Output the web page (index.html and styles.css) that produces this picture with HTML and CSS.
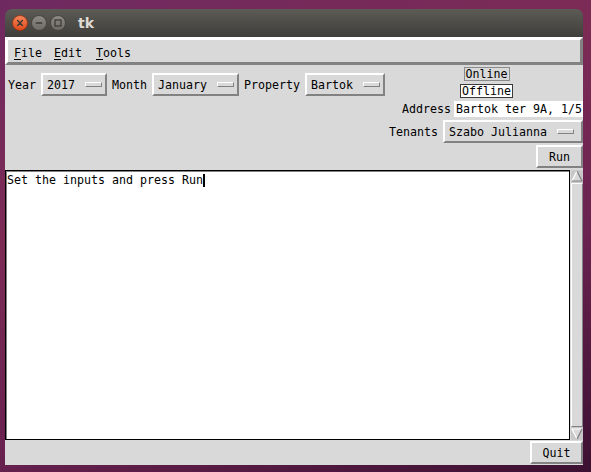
FILE: index.html
```html
<!DOCTYPE html>
<html>
<head>
<meta charset="utf-8">
<title>tk</title>
<link rel="stylesheet" href="styles.css">
</head>
<body>
<div class="window">
  <div class="titlebar">
    <div class="wbtns">
      <span class="wb">
        <svg width="16" height="16" viewBox="0 0 16 16"><defs><linearGradient id="cg" x1="0" y1="0" x2="0" y2="1"><stop offset="0" stop-color="#f6855c"/><stop offset="1" stop-color="#df4a1a"/></linearGradient></defs><circle cx="8" cy="8" r="7.5" fill="url(#cg)" stroke="#9a3210" stroke-width="0.8"/><path d="M5.6 5.6 L10.4 10.4 M10.4 5.6 L5.6 10.4" stroke="#3c3b37" stroke-width="1.4" stroke-linecap="round"/></svg>
      </span>
      <span class="wb">
        <svg width="16" height="16" viewBox="0 0 16 16"><defs><linearGradient id="mg" x1="0" y1="0" x2="0" y2="1"><stop offset="0" stop-color="#8e8b85"/><stop offset="1" stop-color="#6d6a65"/></linearGradient></defs><circle cx="8" cy="8" r="7.5" fill="url(#mg)" stroke="#3e3d39" stroke-width="0.8"/><path d="M4.8 8 L11.2 8" stroke="#3c3b37" stroke-width="1.5"/></svg>
      </span>
      <span class="wb">
        <svg width="16" height="16" viewBox="0 0 16 16"><defs><linearGradient id="xg" x1="0" y1="0" x2="0" y2="1"><stop offset="0" stop-color="#8e8b85"/><stop offset="1" stop-color="#6d6a65"/></linearGradient></defs><circle cx="8" cy="8" r="7.5" fill="url(#xg)" stroke="#3e3d39" stroke-width="0.8"/><rect x="5" y="5" width="6" height="6" fill="none" stroke="#3c3b37" stroke-width="1.3"/></svg>
      </span>
    </div>
    <span class="title">tk</span>
  </div>
  <div class="menubar">
    <span class="mi"><u>F</u>ile</span>
    <span class="mi"><u>E</u>dit</span>
    <span class="mi mi-last"><u>T</u>ools</span>
  </div>
  <div class="main">
    <div class="top">
      <div class="left">
        <span class="lbl">Year</span>
        <div class="om"><span>2017</span><i class="ind"></i></div>
        <span class="lbl">Month</span>
        <div class="om"><span>January</span><i class="ind"></i></div>
        <span class="lbl">Property</span>
        <div class="om"><span>Bartok</span><i class="ind"></i></div>
      </div>
      <div class="right">
        <div class="online">Online</div>
        <div class="offline">Offline</div>
        <div class="row addr"><span class="lbl alab">Address</span><div class="entry">Bartok ter 9A, 1/5</div></div>
        <div class="row ten"><span class="lbl tlab">Tenants</span><div class="om wide"><span>Szabo Julianna</span><i class="ind"></i></div></div>
        <div class="btn run">Run</div>
      </div>
    </div>
    <div class="textrow">
      <div class="text">Set the inputs and press Run<span class="caret"></span></div>
      <div class="sb">
        <svg class="arr" width="12" height="12" viewBox="0 0 12 12"><polygon points="6,1 11,11 1,11" fill="#d9d9d9"/><path d="M1 11 L6 1" stroke="#ffffff" stroke-width="1.2" fill="none"/><path d="M6 1 L11 11 L1 11" stroke="#828282" stroke-width="1.2" fill="none"/></svg>
        <div class="slider"></div>
        <svg class="arr" width="12" height="12" viewBox="0 0 12 12"><polygon points="1,1 11,1 6,11" fill="#d9d9d9"/><path d="M6 11 L1 1 L11 1" stroke="#ffffff" stroke-width="1.2" fill="none"/><path d="M11 1 L6 11" stroke="#828282" stroke-width="1.2" fill="none"/></svg>
      </div>
    </div>
    <div class="bottom"><div class="btn quit">Quit</div></div>
  </div>
</div>
</body>
</html>
```
FILE: styles.css
```css
* { box-sizing: border-box; }
html, body { margin: 0; padding: 0; }
body {
  width: 591px;
  height: 472px;
  overflow: hidden;
  padding: 9px 8px 7px 5px;
  background: linear-gradient(160deg, #6e2a60 0%, #7d2b55 35%, #6a2250 65%, #3c1132 100%);
  font-family: "DejaVu Sans Mono", monospace;
  font-size: 11.63px;
  color: #000;
}
.window {
  width: 578px;
  height: 456px;
  display: flex;
  flex-direction: column;
}
.titlebar {
  height: 28px;
  flex: none;
  background: linear-gradient(#5c5b56, #3f3e3a);
  border-radius: 7px 7px 0 0;
  display: flex;
  align-items: center;
  padding-left: 7px;
}
.wbtns { display: flex; gap: 3px; }
.wb { width: 16px; height: 16px; display: block; }
.wb svg { display: block; }
.title {
  margin-left: 12px;
  font-family: "DejaVu Sans", sans-serif;
  font-weight: bold;
  font-size: 14px;
  color: #dfdbd2;
}
.menubar {
  height: 28px;
  flex: none;
  background: #d9d9d9;
  border: 3px solid;
  border-color: #ffffff #828282 #828282 #ffffff;
  display: flex;
  align-items: center;
  padding-top: 3px;
}
.mi { padding: 0 6px; }
.mi-last { margin-left: 2px; }
.mi u { text-underline-offset: 2px; }
.main {
  flex: 1;
  background: #d9d9d9;
  display: flex;
  flex-direction: column;
}
.top {
  height: 105px;
  flex: none;
  display: flex;
  justify-content: space-between;
}
.left {
  display: flex;
  align-items: center;
  align-self: flex-start;
  padding: 8px 0 0 1px;
}
.lbl { padding: 0 2px; white-space: nowrap; }
.om {
  height: 23px;
  margin: 0 3px;
  border: 2px solid;
  border-color: #ffffff #828282 #828282 #ffffff;
  display: flex;
  align-items: center;
  padding: 0 3px 0 4px;
  white-space: nowrap;
}
.ind {
  display: block;
  width: 17px;
  height: 5px;
  margin-left: 10px;
  border: 1px solid;
  border-color: #ffffff #828282 #828282 #ffffff;
  background: #d9d9d9;
}
.right {
  width: 193px;
  display: flex;
  flex-direction: column;
  align-items: center;
  padding-top: 2px;
}
.online {
  height: 14px;
  line-height: 12px;
  border: 1px solid #8a8a8a;
  padding: 0 1px;
}
.offline {
  margin-top: 3px;
  height: 14px;
  line-height: 12px;
  background: #ffffff;
  border: 1px solid #3a3a3a;
  padding: 0 1px;
}
.row {
  align-self: flex-end;
  display: flex;
  align-items: center;
}
.addr { margin-top: 3px; height: 16px; }
.alab { padding: 0 3px 0 0; }
.entry {
  width: 129px;
  height: 16px;
  line-height: 16px;
  background: #ffffff;
  padding-left: 2px;
  white-space: nowrap;
  overflow: hidden;
}
.ten { margin-top: 3px; }
.tlab { padding: 0 5px 0 0; }
.om.wide { margin: 0; padding-right: 7px; }
.btn {
  height: 23px;
  border: 2px solid;
  border-color: #ffffff #828282 #828282 #ffffff;
  display: flex;
  align-items: center;
  justify-content: center;
}
.run { align-self: flex-end; width: 47px; margin-top: 2px; }
.textrow {
  height: 270px;
  flex: none;
  display: flex;
}
.text {
  flex: 1;
  background: #ffffff;
  border: 1px solid #000000;
  box-shadow: inset 1px 1px 0 #828282;
  padding: 2px 2px 0 1px;
  line-height: 14px;
  white-space: pre;
}
.caret {
  display: inline-block;
  width: 2px;
  height: 13px;
  background: #000;
  vertical-align: -3px;
}
.sb {
  width: 12px;
  margin-left: 1px;
  display: flex;
  flex-direction: column;
  background: #c8c8c8;
}
.arr { display: block; flex: none; }
.slider {
  flex: 1;
  margin: 1px 0;
  background: #d9d9d9;
  border: 1px solid;
  border-color: #ffffff #828282 #828282 #ffffff;
}
.bottom {
  flex: 1;
  display: flex;
  justify-content: flex-end;
  padding-top: 1px;
}
.quit { width: 53px; }
```
